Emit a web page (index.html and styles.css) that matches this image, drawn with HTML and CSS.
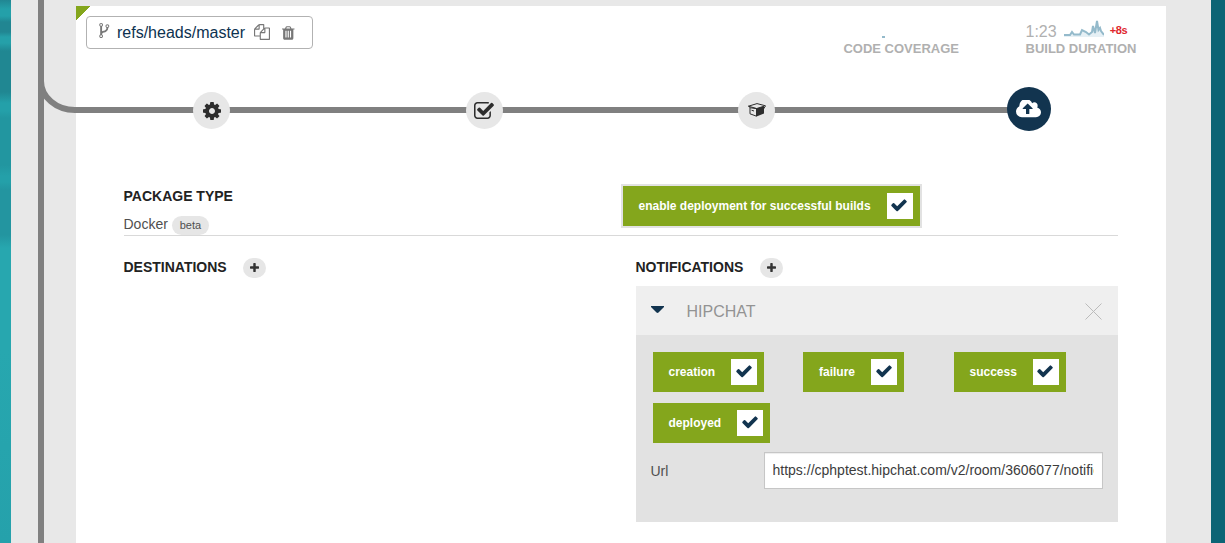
FILE: index.html
```
<!DOCTYPE html>
<html lang="en">
<head>
<meta charset="utf-8">
<title>Pipeline deployment</title>
<link rel="stylesheet" href="styles.css">
</head>
<body>
<svg class="defs" width="0" height="0" aria-hidden="true">
  <symbol id="check" viewBox="0 0 1792 1792"><path d="M1671 566q0 40-28 68l-724 724-136 136q-28 28-68 28t-68-28l-136-136-362-362q-28-28-28-68t28-68l136-136q28-28 68-28t68 28l294 295 656-657q28-28 68-28t68 28l136 136q28 28 28 68z"/></symbol>
  <symbol id="plus" viewBox="192 128 1408 1408"><path d="M1600 736v192q0 40-28 68t-68 28h-416v416q0 40-28 68t-68 28h-192q-40 0-68-28t-28-68v-416h-416q-40 0-68-28t-28-68v-192q0-40 28-68t68-28h416v-416q0-40 28-68t68-28h192q40 0 68 28t28 68v416h416q40 0 68 28t28 68z"/></symbol>
</svg>
<div class="page">
  <div class="trunk"></div>
  <main class="card">
    <header class="card-head">
      <div class="branch">
        <svg class="i-fork" viewBox="384 128 1024 1536"><path d="M672 1472q0-40-28-68t-68-28-68 28-28 68 28 68 68 28 68-28 28-68zm0-1152q0-40-28-68t-68-28-68 28-28 68 28 68 68 28 68-28 28-68zm640 128q0-40-28-68t-68-28-68 28-28 68 28 68 68 28 68-28 28-68zm96 0q0 52-26 96.500t-70 69.500q-2 287-226 414-67 38-203 81-128 40-169.500 71t-41.500 100v26q44 25 70 69.500t26 96.500q0 80-56 136t-136 56-136-56-56-136q0-52 26-96.500t70-69.500v-820q-44-25-70-69.500t-26-96.500q0-80 56-136t136-56 136 56 56 136q0 52-26 96.500t-70 69.500v497q54-26 154-57 55-17 87.500-29.500t70.500-31 59-39.500 40.500-51 28-69.500 8.500-91.500q-44-25-70-69.500t-26-96.500q0-80 56-136t136-56 136 56 56 136z"/></svg>
        <span class="branch-name">refs/heads/master</span>
        <svg class="i-copy" viewBox="0 0 1792 1792"><path d="M1696 384q40 0 68 28t28 68v1216q0 40-28 68t-68 28h-960q-40 0-68-28t-28-68v-288h-544q-40 0-68-28t-28-68v-672q0-40 20-88t48-76l408-408q28-28 76-48t88-20h416q40 0 68 28t28 68v328q68-40 128-40h416zm-544 213l-299 299h299v-299zm-640-384l-299 299h299v-299zm196 647l316-316v-416h-384v416q0 40-28 68t-68 28h-416v640h512v-256q0-40 20-88t48-76zm956 804v-1152h-384v416q0 40-28 68t-68 28h-416v640h896z"/></svg>
        <svg class="i-trash" viewBox="192 128 1408 1536"><path d="M704 1376v-704q0-14-9-23t-23-9h-64q-14 0-23 9t-9 23v704q0 14 9 23t23 9h64q14 0 23-9t9-23zm256 0v-704q0-14-9-23t-23-9h-64q-14 0-23 9t-9 23v704q0 14 9 23t23 9h64q14 0 23-9t9-23zm256 0v-704q0-14-9-23t-23-9h-64q-14 0-23 9t-9 23v704q0 14 9 23t23 9h64q14 0 23-9t9-23zm-544-992h448l-48-117q-7-9-17-11h-317q-10 2-17 11zm928 32v64q0 14-9 23t-23 9h-96v948q0 83-47 143.500t-113 60.500h-832q-66 0-113-58.500t-47-141.500v-952h-96q-14 0-23-9t-9-23v-64q0-14 9-23t23-9h309l70-167q15-37 54-63t79-26h320q40 0 79 26t54 63l70 167h309q14 0 23 9t9 23z"/></svg>
      </div>
      <div class="metric coverage">
        <div class="metric-value"><svg class="dash" viewBox="0 0 3 2"><path d="M0 0h3v2H0z"/></svg></div>
        <div class="metric-label">CODE COVERAGE</div>
      </div>
      <div class="metric">
        <div class="metric-value">
          <span class="time">1:23</span>
          <svg class="spark" viewBox="0 0 40 18"><path class="area" d="M0 15H6L8 12L10 15H16L18 10L22 12L25 14L28 12L29 6L31 13L33 2L35 9L37 10L40 15V17H0z"/><path class="line" d="M0 15H6L8 12L10 14.500H16L18 10L22 12L25 14.500L28 12L29 6L31 13L33 1L34.500 10L36 8L37 11L40 15"/></svg>
          <span class="delta">+8s</span>
        </div>
        <div class="metric-label">BUILD DURATION</div>
      </div>
    </header>

    <nav class="stages">
      <span class="node"><svg class="i-cog" viewBox="128 128 1536 1536"><path d="M1152 896q0-106-75-181t-181-75-181 75-75 181 75 181 181 75 181-75 75-181zm512-109v222q0 12-8 23t-20 13l-185 28q-19 54-39 91 35 50 107 138 10 12 10 25t-9 23q-27 37-99 108t-94 71q-12 0-26-9l-138-108q-44 23-91 38-16 136-29 186-7 28-36 28h-222q-14 0-24.500-8.500t-11.500-21.500l-28-184q-49-16-90-37l-141 107q-10 9-25 9-14 0-25-11-126-114-165-168-7-10-7-23 0-12 8-23 15-21 51-66.500t54-70.500q-27-50-41-99l-183-27q-13-2-21-12.500t-8-23.500v-222q0-12 8-23t19-13l186-28q14-46 39-92-40-57-107-138-10-12-10-24 0-10 9-23 26-36 98.500-107.500t94.500-71.500q13 0 26 10l138 107q44-23 91-38 16-136 29-186 7-28 36-28h222q14 0 24.500 8.500t11.500 21.500l28 184q49 16 90 37l142-107q9-9 24-9 13 0 25 10 129 119 165 170 7 8 7 22 0 12-8 23-15 21-51 66.500t-54 70.500q26 50 41 98l183 28q13 2 21 12.500t8 23.500z"/></svg></span>
      <span class="node"><svg class="i-test" viewBox="64 128 1664 1408"><path d="M1472 930v318q0 119-84.500 203.500t-203.500 84.500h-832q-119 0-203.500-84.500t-84.500-203.500v-832q0-119 84.500-203.500t203.500-84.500h832q63 0 117 25 15 7 18 23 3 17-9 29l-49 49q-10 10-23 10-3 0-9-2-23-6-45-6h-832q-66 0-113 47t-47 113v832q0 66 47 113t113 47h832q66 0 113-47t47-113v-254q0-13 9-22l64-64q10-10 23-10 6 0 12 3 20 8 20 29zm231-489l-814 814q-24 24-57 24t-57-24l-430-430q-24-24-24-57t24-57l110-110q24-24 57-24t57 24l263 263 647-647q24-24 57-24t57 24l110 110q24 24 24 57t-24 57z"/></svg></span>
      <span class="node"><svg class="i-box" viewBox="0 0 18 14"><path class="solid" d="M8.500 5.400L16 3.200V10.500L8.500 13.500z"/><path class="wire" d="M2 4.500V10.800L8.500 13.200V5.500M.5 3.200L9 .6L17.500 2.800L15.500 6M.5 3.200L2.500 4.800L8.500 5.600L16 3.200M.5 3.200L8.500 5.500M3.500 7.200L6 8"/></svg></span>
      <span class="node current"><svg class="i-cloud" viewBox="-64 256 1920 1280"><path d="M1216 864q0-14-9-23l-352-352q-9-9-23-9t-23 9l-351 351q-10 12-10 24 0 14 9 23t23 9h224v352q0 13 9.500 22.500t22.500 9.500h192q13 0 22.500-9.500t9.500-22.500v-352h224q13 0 22.500-9.500t9.500-22.500zm640 288q0 159-112.500 271.500t-271.500 112.500h-1088q-185 0-316.500-131.500t-131.500-316.500q0-130 70-240t188-165q-2-30-2-43 0-212 150-362t362-150q156 0 285.500 87t188.500 231q71-62 166-62 106 0 181 75t75 181q0 76-41 138 130 31 213.500 135.500t83.500 238.500z"/></svg></span>
    </nav>

    <section class="package">
      <div class="package-type">
        <h2>PACKAGE TYPE</h2>
        <div class="package-name"><span>Docker</span><span class="badge">beta</span></div>
      </div>
      <div class="toggle outlined"><span>enable deployment for successful builds</span><span class="tick"><svg><use href="#check"/></svg></span></div>
    </section>

    <div class="columns">
      <section>
        <div class="title"><h2>DESTINATIONS</h2><span class="add"><svg><use href="#plus"/></svg></span></div>
      </section>
      <section>
        <div class="title"><h2>NOTIFICATIONS</h2><span class="add"><svg><use href="#plus"/></svg></span></div>
        <div class="panel">
          <div class="panel-head">
            <svg class="caret" viewBox="0 0 13 7"><path d="M0 0H13V1L7.500 6.500Q6.500 7.300 5.500 6.500L0 1z"/></svg>
            <span class="panel-name">HIPCHAT</span>
            <svg class="close" viewBox="0 0 17 17"><path d="M.5 .5L16.500 16.500M16.500 .5L.5 16.500"/></svg>
          </div>
          <div class="panel-body">
            <div class="events">
              <div class="toggle"><span>creation</span><span class="tick"><svg><use href="#check"/></svg></span></div>
              <div class="toggle"><span>failure</span><span class="tick"><svg><use href="#check"/></svg></span></div>
              <div class="toggle"><span>success</span><span class="tick"><svg><use href="#check"/></svg></span></div>
              <div class="toggle"><span>deployed</span><span class="tick"><svg><use href="#check"/></svg></span></div>
            </div>
            <div class="field"><label for="url">Url</label><input id="url" type="text" value="https://cphptest.hipchat.com/v2/room/3606077/notification"></div>
          </div>
        </div>
      </section>
    </div>
  </main>
  <svg class="track" viewBox="0 0 1000 50"><path d="M3 3A34 29 0 0 0 37 32H991"/></svg>
</div>
</body>
</html>
```
FILE: styles.css
```
* { box-sizing: border-box; }
html { height: 100%; }
body {
  margin: 0;
  height: 100%;
  overflow: hidden;
  padding: 0 14px 0 11px;
  font: 14px/20px "Liberation Sans", Arial, sans-serif;
  color: #4f4f4f;
  background:
    linear-gradient(#0c6475, #0c6475) right top / 14px 100% no-repeat,
    linear-gradient(#218692 0, #24a0a9 9px, #24a0a9 16px, #218692 22px, #218692 32px, #25a0a9 37px, #25a0a9 43px, #208792 51px, #208792 92px, #24a0a9 103px, #24a0a9 111px, #2296a0 118px, #2296a0 165px, #24a0a9 176px, #24a0a9 182px, #2395a0 190px, #2395a0 235px, #27a7af 248px, #27a7af 350px, #25a1ab 543px);
}
svg { display: block; fill: currentColor; flex: none; }
.defs { position: absolute; }
h2 { margin: 0; font-size: 14px; line-height: 20px; color: #222; }

.page {
  position: relative;
  display: flex;
  height: 100%;
  padding: 6px 45px 0 27px;
  background: #e8e8e8;
}
.trunk { width: 6px; height: 543px; margin: -6px 32px 0 0; background: #808080; flex: none; }
.track {
  position: absolute;
  left: 27px;
  top: 78px;
  width: 1000px;
  height: 50px;
}
.track path { fill: none; stroke: #808080; stroke-width: 6; }

.card { width: 1090px; background: linear-gradient(135deg, #84a61c 10px, #fff 10px); }
.card-head { display: flex; height: 81px; padding: 10px 29.500px 0 10px; }
.branch {
  display: flex;
  width: 227px;
  height: 33px;
  padding: 0 0 0 12px;
  border: 1px solid #b2b2b2;
  border-radius: 4px;
  color: #777;
}
.i-fork { width: 10.500px; height: 15px; margin: 5.500px 7.500px 0 0; }
.branch-name { font-size: 16px; line-height: 31px; color: #0d3250; width: 128px; margin-right: 8.500px; }
.i-copy { width: 16px; height: 16px; margin: 7px 12.500px 0 0; }
.i-trash { width: 12.500px; height: 14px; margin-top: 8.500px; }

.metric { color: #b0b0b0; }
.metric.coverage { margin: 0 66.500px 0 auto; }
.metric-value { display: flex; height: 25px; padding-top: 4px; }
.metric-label { font-size: 13px; line-height: 15px; font-weight: bold; }
.dash { width: 3px; height: 2px; margin: 16px 0 0 39px; fill: #94bacb; }
.time { font-size: 16px; line-height: 24px; margin-right: 7px; }
.spark { width: 40px; height: 18px; }
.spark .area { fill: #e6f0f5; }
.spark .line { fill: none; stroke: #94bacb; stroke-width: 2; }
.delta { font-size: 11px; line-height: 20px; font-weight: bold; letter-spacing: -.4px; color: #e0272d; margin-left: 6px; }

.stages { position: relative; z-index: 1; display: flex; padding-left: 117px; height: 97px; }
.node {
  display: flex;
  align-items: center;
  justify-content: center;
  width: 37px;
  height: 37px;
  margin: 5px 235.500px 0 0;
  border-radius: 50%;
  background: #e7e7e7;
  color: #2d2d2d;
}
.node:nth-child(3) { margin-right: 232px; }
.node.current { width: 44px; height: 44px; margin: 0; background: #12344f; color: #fff; }
.i-cog { width: 18px; height: 18px; }
.i-test { width: 20px; height: 17px; margin-bottom: 1px; }
.i-box { width: 18px; height: 14px; margin-bottom: 2px; }
.i-box .wire { fill: none; stroke: #2d2d2d; stroke-width: 1; }
.i-cloud { width: 25px; height: 18px; margin-right: 1px; }

.package {
  display: flex;
  height: 52px;
  margin: 0 48px 0 47.500px;
  border-bottom: 1px solid #d9d9d9;
}
.package-type { width: 497.500px; padding-top: 2px; }
.package-name { display: flex; padding-top: 8px; }
.badge {
  margin: 2px 0 0 4px;
  width: 37px;
  height: 19px;
  border-radius: 10px;
  background: #e6e6e6;
  font-size: 11px;
  line-height: 19px;
  text-align: center;
}

.toggle {
  display: flex;
  align-items: center;
  gap: 16px;
  width: max-content;
  height: 40px;
  padding: 0 7px 0 16px;
  background: #84a61c;
  color: #fff;
  font-size: 12px;
  font-weight: bold;
}
.toggle.outlined { height: 44px; padding-left: 15.500px; gap: 16.500px; border: 2px solid #e2e2e2; }
.tick {
  display: flex;
  align-items: center;
  justify-content: center;
  width: 26px;
  height: 26px;
  background: #fff;
  color: #12344f;
}
.tick svg { width: 18px; height: 18px; margin: 0 1px 2px 0; }
.toggle.outlined .tick svg { margin-right: 2px; }

.columns { display: grid; grid-template-columns: 512px 482px; margin-left: 47.500px; padding-top: 21px; }
.title { display: flex; height: 29px; }
.add {
  display: flex;
  align-items: center;
  justify-content: center;
  width: 23px;
  height: 20px;
  margin: 1px 0 0 16.500px;
  border-radius: 10px;
  background: #e6e6e6;
  color: #333;
}
.add svg { width: 9px; height: 9px; margin-bottom: 1px; }

.panel { height: 236px; background: #e2e2e2; }
.panel-head { display: flex; height: 49px; padding: 0 16px 0 15.500px; background: #efefef; }
.caret { width: 13px; height: 7px; margin: 20px 22.500px 0 0; color: #12344f; }
.panel-name { font-size: 16px; line-height: 52px; color: #939393; }
.close { width: 17px; height: 17px; margin: 16.500px 0 0 auto; }
.close path { stroke: #bbb; stroke-width: 1; }
.panel-body { padding: 17px 15px 0; }
.events { display: grid; grid-template-columns: repeat(3, 150.500px); row-gap: 11px; padding-left: 2px; }
.field { display: flex; justify-content: space-between; margin-top: 9px; line-height: 38px; }
.field input {
  width: 339px;
  height: 37px;
  padding: 0 8px 2px;
  border: 1px solid #c6c6c6;
  border-radius: 0;
  background: #fff;
  box-shadow: inset 0 1px 1px rgba(0, 0, 0, .075);
  font: inherit;
  line-height: 34px;
  color: #3c3c3c;
}
```
